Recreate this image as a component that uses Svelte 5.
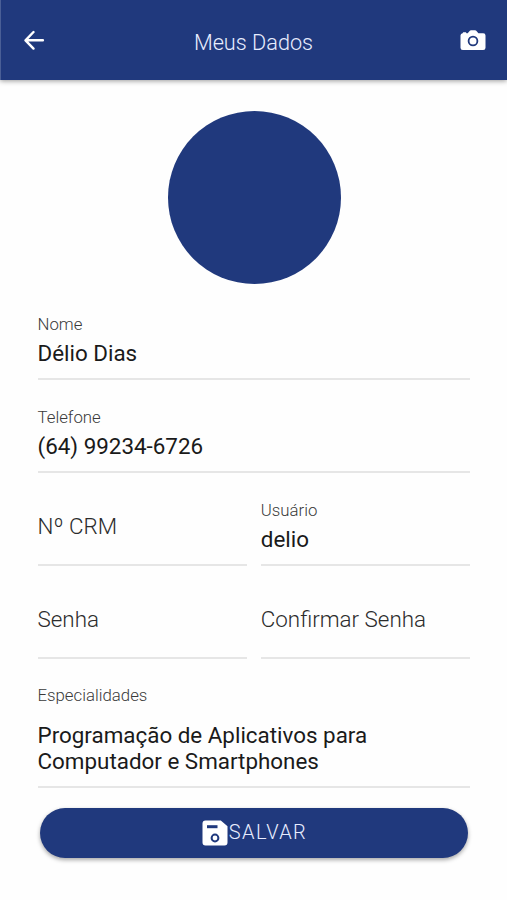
<script>
  const rows = [
    [{ label: 'Nome', value: 'Délio Dias' }],
    [{ label: 'Telefone', value: '(64) 99234-6726' }],
    [{ label: 'Nº CRM', value: '' }, { label: 'Usuário', value: 'delio' }],
    [{ label: 'Senha', value: '' }, { label: 'Confirmar Senha', value: '' }]
  ];
</script>

<main class="page">
  <header class="toolbar">
    <button class="icon-button" aria-label="Voltar">
      <svg width="22" height="20" viewBox="0 0 22 20" fill="none" stroke="#fff" stroke-width="2.4" stroke-linecap="round" stroke-linejoin="round">
        <path d="M10.500 2 2.500 10.300l8 8.300M2.700 10.300h17.200" />
      </svg>
    </button>
    <h1>Meus Dados</h1>
    <button class="icon-button" aria-label="Câmera">
      <svg width="26" height="21" viewBox="0 0 26 21">
        <path fill="#fff" d="M2.600 3.200 3.200 2.300h2.700l.6.9h1.200L9.600.9C10 .5 10.500.3 11 .3h4c.6 0 1.100.2 1.500.6l1.900 2.300h4.800a2.300 2.300 0 0 1 2.300 2.300v12.200a2.300 2.300 0 0 1-2.300 2.300H2.800A2.300 2.300 0 0 1 .5 17.700V5.500a2.300 2.300 0 0 1 2.100-2.300Z" />
        <circle cx="13" cy="11" r="4.400" fill="#fff" stroke="#20397d" stroke-width="1.800" />
      </svg>
    </button>
  </header>

  <div class="avatar"></div>

  <form class="form">
    {#each rows as row}
      <div class="row">
        {#each row as field}
          <div class="field" class:empty={!field.value}>
            <span class="label">{field.label}</span>
            {#if field.value}<span class="value">{field.value}</span>{/if}
          </div>
        {/each}
      </div>
    {/each}
    <div class="field area">
      <span class="label">Especialidades</span>
      <span class="value">Programação de Aplicativos para<br />Computador e Smartphones</span>
    </div>
    <button class="save" type="button">
      <svg width="26" height="26" viewBox="0 0 26 26">
        <path fill="#fff" d="M3.500.5h15.300L25.500 6.200v16.300a3 3 0 0 1-3 3h-19a3 3 0 0 1-3-3v-19a3 3 0 0 1 3-3Z" />
        <path fill="#20397d" d="M5 5.200h10.500v3H5z" />
        <circle cx="13" cy="18" r="3.400" fill="#fff" stroke="#20397d" stroke-width="2" />
      </svg>
      <span>SALVAR</span>
    </button>
  </form>
</main>

<style>
  :global(body) {
    margin: 0;
    background: #fefefe;
  }
  .page {
    width: 507px;
    height: 900px;
    overflow: hidden;
    font-family: Roboto, 'Liberation Sans', sans-serif;
    color: #1a1a1a;
  }
  button {
    border: 0;
    padding: 0;
    background: none;
    font-family: inherit;
  }
  .toolbar {
    box-sizing: border-box;
    height: 79.500px;
    padding: 3px 21px 0 22px;
    display: flex;
    align-items: center;
    justify-content: space-between;
    background: #20397d;
    border-left: 1px solid #4a5f96;
    box-shadow: 0 1px 5px rgba(0, 0, 0, 0.4);
  }
  .icon-button {
    display: flex;
    margin-bottom: 2px;
  }
  h1 {
    margin: 4px 0 0 2px;
    font-size: 21.700px;
    line-height: 26px;
    font-weight: 300;
    color: #e8edff;
  }
  .avatar {
    width: 173px;
    height: 173px;
    margin: 31.500px auto 0;
    position: relative;
    left: 1px;
    border-radius: 50%;
    background: #20397d;
  }
  .form {
    margin: 3.800px 37px 0 37.500px;
  }
  .row {
    display: flex;
    gap: 14px;
  }
  .field {
    box-sizing: border-box;
    flex: 1;
    height: 92.700px;
    padding-top: 26.700px;
    display: flex;
    flex-direction: column;
    border-bottom: 2px solid #e6e6e6;
  }
  .label {
    font-size: 16.800px;
    line-height: 20px;
    font-weight: 300;
    color: #3a3a3a;
  }
  .value {
    margin-top: 5px;
    font-size: 22.400px;
    line-height: 28px;
  }
  .empty .label {
    margin-top: 12px;
    font-size: 22.400px;
    line-height: 28px;
    color: #2c2c2c;
  }
  .area {
    height: 129px;
  }
  .area .value {
    margin-top: 16.500px;
    line-height: 26.600px;
  }
  .save {
    width: 428px;
    height: 50.500px;
    margin: 20px 0 0 2.500px;
    display: flex;
    align-items: center;
    justify-content: center;
    border-radius: 26px;
    background: #20397d;
    color: #e8edff;
    font-size: 20px;
    font-weight: 300;
    letter-spacing: 1.400px;
    box-shadow: 0 2px 4px rgba(0, 0, 0, 0.35);
  }
  .save span {
    margin: -2px -1px 0 1px;
  }
</style>
